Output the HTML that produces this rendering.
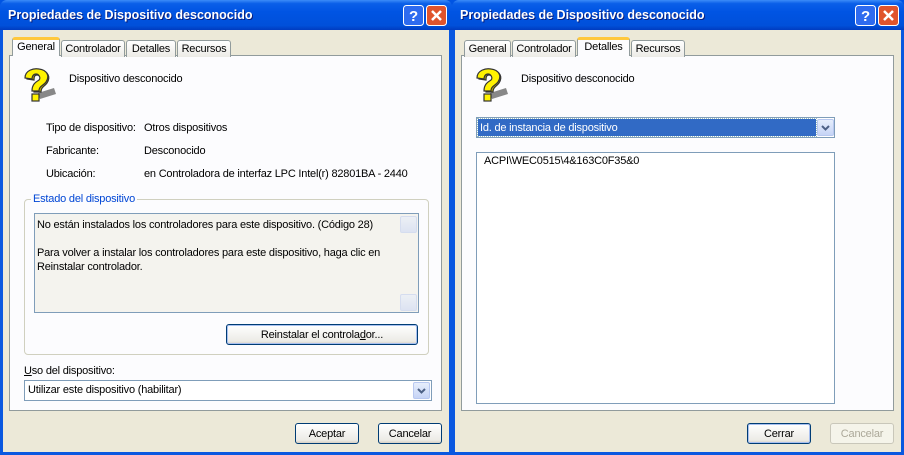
<!DOCTYPE html>
<html><head><meta charset="utf-8"><style>
*{box-sizing:border-box;margin:0;padding:0}
body{width:904px;height:455px;overflow:hidden;background:#0054E3;font-family:"Liberation Sans",sans-serif;font-size:11px;letter-spacing:-0.2px;color:#000;position:relative}
.a{position:absolute}
.win{position:absolute;top:0;height:455px;width:452px;background:#0A58E0;border-radius:7px 7px 0 0}
.tb{position:absolute;left:0;top:0;right:0;height:30px;border-radius:7px 7px 0 0;background:linear-gradient(#3C8CF8 0%,#0A5FE8 12%,#0054E3 40%,#0050DA 85%,#003CC0 100%)}
.tt{position:absolute;left:8px;top:8px;color:#fff;font-weight:bold;font-size:12.5px;letter-spacing:0;text-shadow:1px 1px #0A1E7A}
.body{position:absolute;left:3px;top:30px;right:3px;bottom:3px;background:#ECE9D8}
.btn{position:absolute;border:1px solid #003C74;border-radius:3px;background:linear-gradient(#fff,#ECEBE6 85%,#D6D0C5);text-align:center;line-height:20px;height:21px}
.tab{position:absolute;border:1px solid #919B9C;border-bottom:none;border-radius:3px 3px 0 0;background:linear-gradient(#fff,#ECEBE6);text-align:center;line-height:16px;height:17px}
.tab.s{background:#FCFCFE;border-top:3px solid #FFC83C;height:19px;line-height:14px;z-index:2}
.panel{position:absolute;border:1px solid #919B9C;background:#FCFCFE}
.sbtn{position:absolute;width:17px;border:1px solid #B8C8F0;border-radius:2px;background:linear-gradient(#E6EEFC,#C6D4F6)}
</style></head><body>

<svg width="0" height="0" style="position:absolute"><defs>
<g id="q"><path d="M16 25 L32 20 L34 26 L18 31Z" fill="#888"/><path d="M5 11 C5 3 13 1 18 2 C26 3 29 9 25 15 C22 19 19 19 19 24 L12 24 C12 17 16 15 18 13 C20 11 18 7 15 7 C12 7 12 10 12 12Z" fill="#C8B400" stroke="#333" stroke-width="1.2"/><path d="M3 10 C3 2 12 0 17 1 C25 2 28 8 24 14 C21 18 17 18 17 23 L10 23 C10 16 14 14 17 12 C19 10 17 6 14 6 C11 6 10 9 10 11Z" fill="#FFF200" stroke="#333" stroke-width="1.2"/><rect x="10" y="26" width="7" height="7" fill="#FFF200" stroke="#333" stroke-width="1.2"/></g>
</defs></svg>

<!-- LEFT WINDOW -->
<div class="win" style="left:0">
<div class="tb"></div>
<div class="tt">Propiedades de Dispositivo desconocido</div>
<svg class="a" style="left:403px;top:5px" width="21" height="21"><rect x=".5" y=".5" width="20" height="20" rx="3" fill="#2E6BEF" stroke="#fff"/><text x="10.5" y="16" fill="#fff" font-size="15" font-weight="bold" text-anchor="middle" font-family="Liberation Sans">?</text></svg>
<svg class="a" style="left:426px;top:5px" width="21" height="21"><rect x=".5" y=".5" width="20" height="20" rx="3" fill="#E0542C" stroke="#fff"/><path d="M6 6L15 15M15 6L6 15" stroke="#fff" stroke-width="2.5"/></svg>
<div class="body"></div>
<div class="panel" style="left:9px;top:55px;width:433px;height:356px"></div>
<div class="tab s" style="left:12px;top:37px;width:48px">General</div>
<div class="tab" style="left:61px;top:40px;width:64px">Controlador</div>
<div class="tab" style="left:126px;top:40px;width:50px">Detalles</div>
<div class="tab" style="left:177px;top:40px;width:54px">Recursos</div>
<svg class="a" style="left:22px;top:68px" width="36" height="36"><use href="#q"/></svg>
<div class="a" style="left:69px;top:73px">Dispositivo desconocido</div>
<div class="a" style="left:46px;top:122px">Tipo de dispositivo:</div><div class="a" style="left:144px;top:122px">Otros dispositivos</div>
<div class="a" style="left:46px;top:145px">Fabricante:</div><div class="a" style="left:144px;top:145px">Desconocido</div>
<div class="a" style="left:46px;top:168px">Ubicación:</div><div class="a" style="left:144px;top:168px">en Controladora de interfaz LPC Intel(r) 82801BA - 2440</div>
<div class="a" style="left:24px;top:199px;width:405px;height:156px;border:1px solid #D0D0BF;border-radius:4px"></div>
<div class="a" style="left:31px;top:193px;background:#FCFCFE;color:#0046D5;padding:0 2px">Estado del dispositivo</div>
<div class="a" style="left:34px;top:213px;width:385px;height:100px;border:1px solid #7F9DB9;background:#F4F3EE"></div>
<div class="a" style="left:37px;top:218px;line-height:14px">No están instalados los controladores para este dispositivo. (Código 28)<br><br>Para volver a instalar los controladores para este dispositivo, haga clic en<br>Reinstalar controlador.</div>
<div class="sbtn" style="left:400px;top:216px;height:17px;opacity:.5"></div>
<div class="sbtn" style="left:400px;top:294px;height:17px;opacity:.5"></div>
<div class="btn" style="left:226px;top:324px;width:192px;box-shadow:inset 0 0 0 1px #A8C0F0">Reinstalar el controla<u>d</u>or...</div>
<div class="a" style="left:24px;top:365px"><u>U</u>so del dispositivo:</div>
<div class="a" style="left:24px;top:380px;width:408px;height:21px;border:1px solid #7F9DB9;background:#fff;padding:3px 0 0 3px">Utilizar este dispositivo (habilitar)</div>
<div class="sbtn" style="left:413px;top:382px;height:17px"><svg width="15" height="15"><path d="M4 6L7.5 9.5L11 6" stroke="#4D6185" stroke-width="2" fill="none"/></svg></div>
<div class="btn" style="left:295px;top:423px;width:64px">Aceptar</div>
<div class="btn" style="left:378px;top:423px;width:64px">Cancelar</div>
</div>

<!-- RIGHT WINDOW -->
<div class="win" style="left:452px">
<div class="tb"></div>
<div class="tt">Propiedades de Dispositivo desconocido</div>
<svg class="a" style="left:403px;top:5px" width="21" height="21"><rect x=".5" y=".5" width="20" height="20" rx="3" fill="#2E6BEF" stroke="#fff"/><text x="10.5" y="16" fill="#fff" font-size="15" font-weight="bold" text-anchor="middle" font-family="Liberation Sans">?</text></svg>
<svg class="a" style="left:426px;top:5px" width="21" height="21"><rect x=".5" y=".5" width="20" height="20" rx="3" fill="#E0542C" stroke="#fff"/><path d="M6 6L15 15M15 6L6 15" stroke="#fff" stroke-width="2.5"/></svg>
<div class="body"></div>
<div class="panel" style="left:9px;top:55px;width:433px;height:356px"></div>
<div class="tab" style="left:12px;top:40px;width:47px">General</div>
<div class="tab" style="left:60px;top:40px;width:64px">Controlador</div>
<div class="tab s" style="left:125px;top:37px;width:53px">Detalles</div>
<div class="tab" style="left:179px;top:40px;width:54px">Recursos</div>
<svg class="a" style="left:22px;top:68px" width="36" height="36"><use href="#q"/></svg>
<div class="a" style="left:69px;top:73px">Dispositivo desconocido</div>
<div class="a" style="left:24px;top:117px;width:359px;height:21px;border:1px solid #7F9DB9;background:#fff"></div>
<div class="a" style="left:26px;top:119px;width:338px;height:17px;background:#316AC5;color:#fff;padding:3px 0 0 2px;outline:1px dotted #9BB">Id. de instancia de dispositivo</div>
<div class="sbtn" style="left:365px;top:119px;height:17px"><svg width="15" height="15"><path d="M4 6L7.5 9.5L11 6" stroke="#4D6185" stroke-width="2" fill="none"/></svg></div>
<div class="a" style="left:24px;top:152px;width:359px;height:252px;border:1px solid #7F9DB9;background:#fff;padding:2px 0 0 7px">ACPI\WEC0515\4&amp;163C0F35&amp;0</div>
<div class="btn" style="left:295px;top:423px;width:64px;box-shadow:inset 0 0 0 1px #A8C0F0">Cerrar</div>
<div class="btn" style="left:378px;top:423px;width:64px;border-color:#C9C7BA;background:#F5F4EA;color:#ACA899">Cancelar</div>
</div>
</body></html>
